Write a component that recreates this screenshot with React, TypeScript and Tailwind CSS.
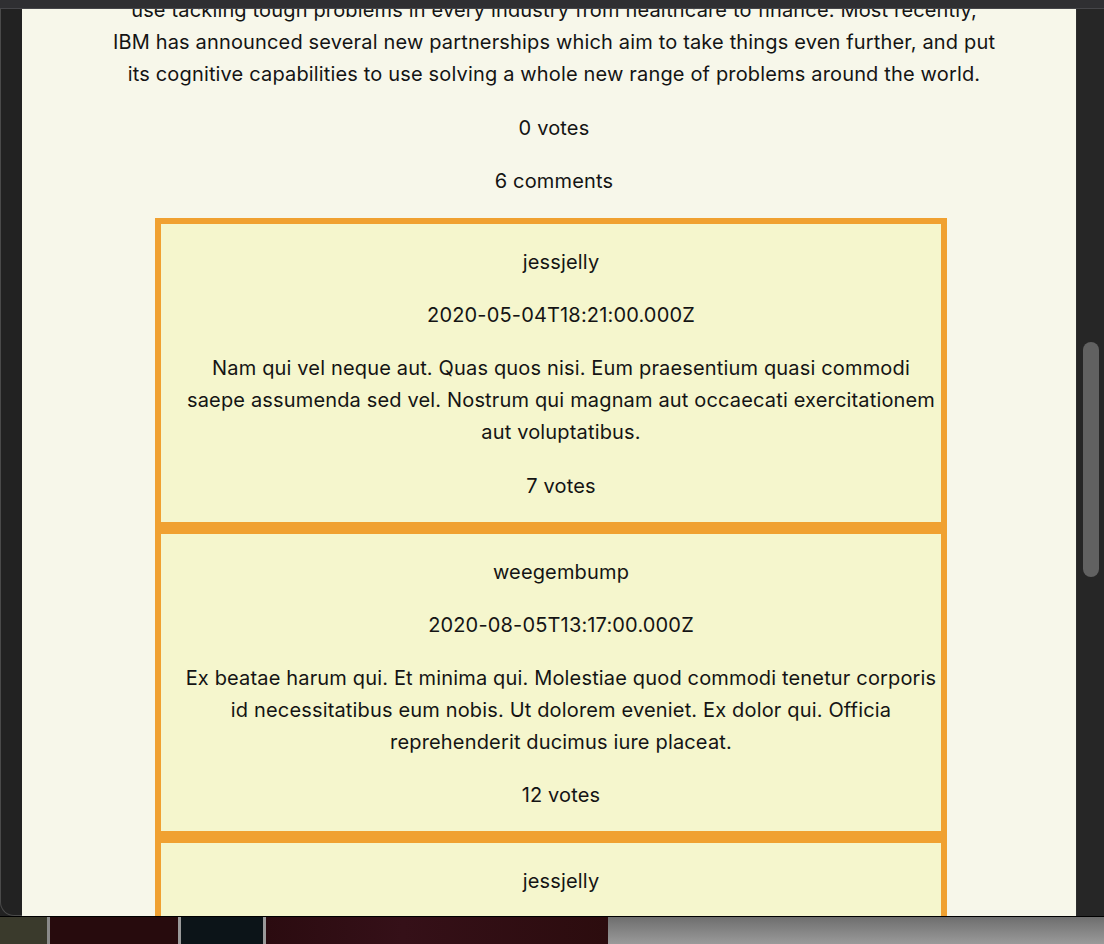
import React from 'react';

const comments = [
  {
    author: 'jessjelly',
    created: '2020-05-04T18:21:00.000Z',
    body: [
      'Nam qui vel neque aut. Quas quos nisi. Eum praesentium quasi commodi',
      'saepe assumenda sed vel. Nostrum qui magnam aut occaecati exercitationem',
      'aut voluptatibus.',
    ],
    votes: 7,
  },
  {
    author: 'weegembump',
    created: '2020-08-05T13:17:00.000Z',
    body: [
      'Ex beatae harum qui. Et minima qui. Molestiae quod commodi tenetur corporis',
      'id necessitatibus eum nobis. Ut dolorem eveniet. Ex dolor qui. Officia',
      'reprehenderit ducimus iure placeat.',
    ],
    votes: 12,
  },
  {
    author: 'jessjelly',
    created: '2020-03-12T09:02:00.000Z',
    body: ['Voluptas ut et quo. Sed eius quis et.'],
    votes: 3,
  },
];

const articleLines = [
  'use tackling tough problems in every industry from healthcare to finance. Most recently,',
  'IBM has announced several new partnerships which aim to take things even further, and put',
  'its cognitive capabilities to use solving a whole new range of problems around the world.',
];

function Line({ children }: { children: React.ReactNode }) {
  return <span className="block whitespace-nowrap">{children}</span>;
}

function CommentCard({ c }: { c: (typeof comments)[number] }) {
  return (
    <li className="border-[6px] border-[#f0a131] bg-[#f5f6cd] pl-[20px] text-center">
      <p className="mt-[22px] mb-[21px]">{c.author}</p>
      <p className="my-[21.2px]">{c.created}</p>
      <p className="my-[21.2px]">
        {c.body.map((l, i) => (
          <Line key={i}>{l}</Line>
        ))}
      </p>
      <p className="mt-[21.2px] mb-[20px]">{c.votes} votes</p>
    </li>
  );
}

export default function App() {
  return (
    <div className="flex h-[944px] w-[1104px] flex-col overflow-hidden bg-[#2a0c0e]">
      {/* window title strip */}
      <div className="h-[9px] shrink-0 border-b border-[#46464a] bg-[#2f2f32]" />

      <div className="flex h-[907px] shrink-0">
        <div className="w-[22px] shrink-0 bg-[#222222]">
          <div className="h-full w-[22px] rounded-bl-[14px] border-b border-l border-[#4a4a4a] bg-[#222222]" />
        </div>

        <main
          className="flex-1 overflow-hidden bg-[#f7f7ea] text-[20px] leading-[32px] tracking-[0.16px] text-[#141414]"
          style={{ fontFamily: 'Inter, "Noto Sans", sans-serif' }}
        >
          <div className="mt-[-15px] pl-[10px] text-center">
            <p>
              {articleLines.map((l, i) => (
                <Line key={i}>{l}</Line>
              ))}
            </p>
            <p className="mt-[21.5px]">0 votes</p>
            <p className="mt-[21.5px]">6 comments</p>
          </div>

          <ul className="mt-[21px] ml-[133px] w-[792px]">
            {comments.map((c, i) => (
              <CommentCard key={i} c={c} />
            ))}
          </ul>
        </main>

        <div className="flex w-[28px] shrink-0 justify-center border-l border-[#2e2e2e] bg-[#262626]">
          <div className="mt-[333px] h-[235px] w-[16px] rounded-full bg-[#616161]" />
        </div>
      </div>

      {/* desktop dock strip */}
      <div className="flex h-[28px] shrink-0 border-t border-black">
        <div className="w-[50px] border-r-[3px] border-[#8a8a8a] bg-[#3a3a2c]" />
        <div className="w-[128px] bg-[#270b0d]" />
        <div className="w-[88px] border-x-[3px] border-[#9a9a9a] bg-[#0c1418]" />
        <div className="w-[342px] bg-[linear-gradient(90deg,#2b0b10,#351018_40%,#2c0c0e)]" />
        <div className="flex-1 bg-[linear-gradient(180deg,#6e6e6e,#9a9a9a)]" />
      </div>
    </div>
  );
}
